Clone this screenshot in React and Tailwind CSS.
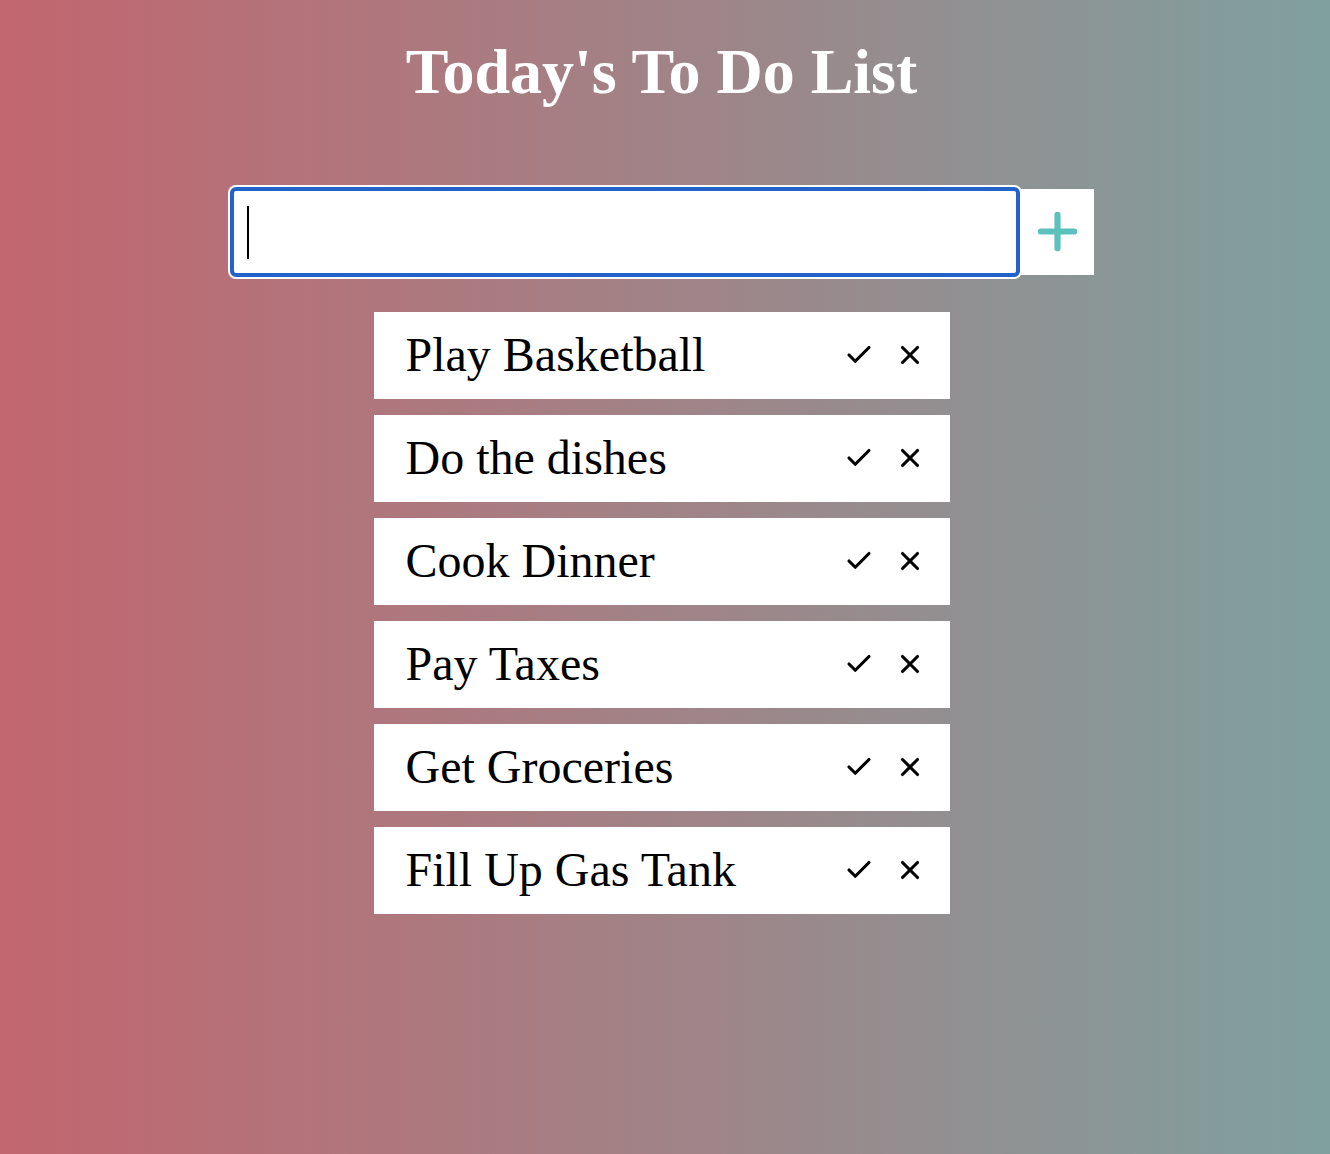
import React from 'react';
import { Check, X, Plus } from 'lucide-react';

const todos = ['Play Basketball', 'Do the dishes', 'Cook Dinner', 'Pay Taxes', 'Get Groceries', 'Fill Up Gas Tank'];

export default function App() {
  return (
    <div
      className="min-h-screen pr-[7px] bg-[linear-gradient(to_right,#c2666f,#7fa09f)]"
      style={{ fontFamily: '"Liberation Serif", "Times New Roman", serif' }}
    >
      <h1 className="pt-[35px] text-center text-[64px] font-bold leading-[1.15] text-white">Today's To Do List</h1>

      {/* Input row */}
      <div className="mt-[78px] flex items-center justify-center">
        <div className="relative">
          <input
            type="text"
            className="block h-[90px] w-[790px] rounded-[6px] border-[4px] border-[#2262c9] bg-white px-3 text-[48px] caret-transparent shadow-[0_0_0_2px_#ffffff] outline-none"
          />
          <span className="absolute left-[17px] top-[19px] h-[53px] w-[2px] bg-black" />
        </div>
        <button className="ml-[1px] flex h-[86px] w-[73px] items-center justify-center bg-white">
          <Plus size={57} strokeWidth={2.6} color="#5cc0bc" />
        </button>
      </div>

      {/* List */}
      <ul className="mt-[35px] flex flex-col items-center gap-4">
        {todos.map((t) => (
          <li key={t} className="flex h-[87px] w-[576px] items-center bg-white pl-8 pr-[25px]">
            <span className="flex-1 text-[48px] leading-none text-black">{t}</span>
            <button className="flex items-center">
              <Check size={30} strokeWidth={2.5} color="#000" />
            </button>
            <button className="ml-[21px] flex items-center">
              <X size={30} strokeWidth={2.5} color="#000" />
            </button>
          </li>
        ))}
      </ul>
    </div>
  );
}
